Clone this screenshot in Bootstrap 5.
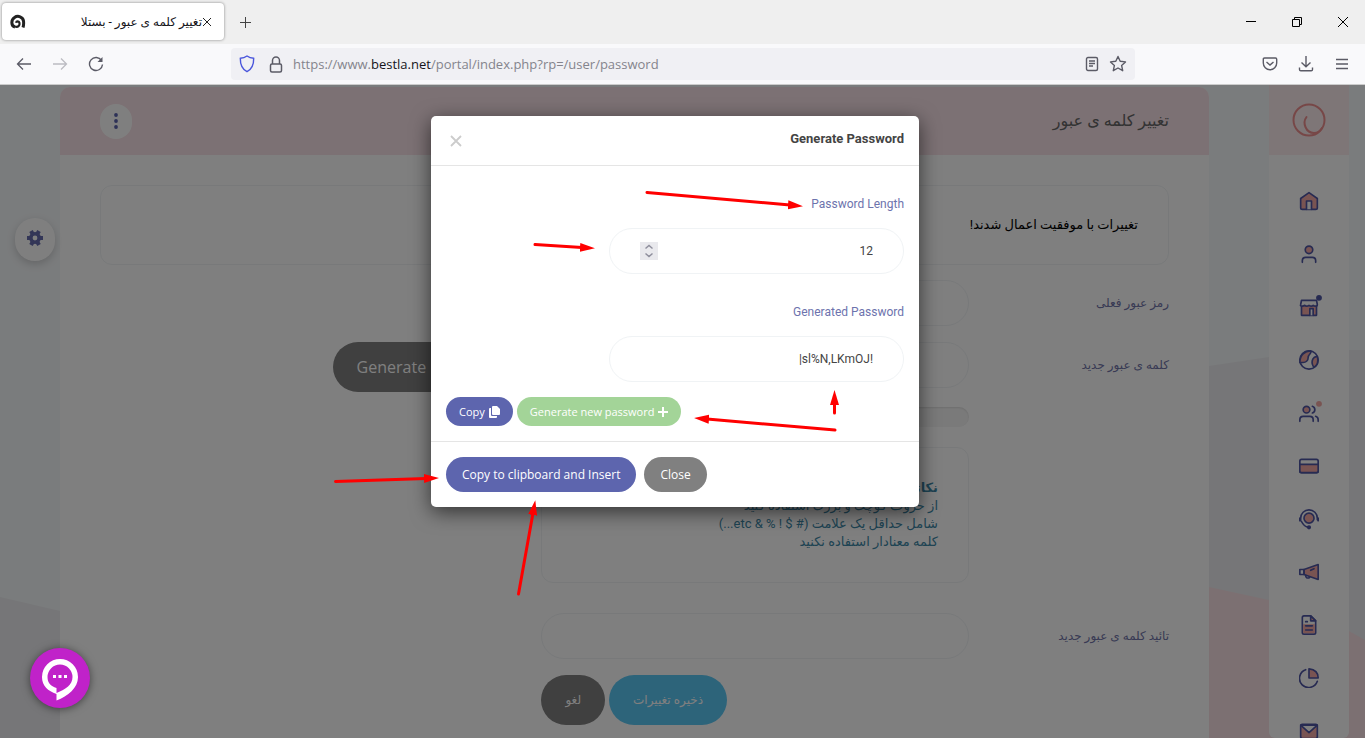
<!DOCTYPE html>
<html lang="fa">
<head>
<meta charset="utf-8">
<meta name="viewport" content="width=device-width, initial-scale=1">
<title>تغییر کلمه ی عبور - بستلا</title>
<link href="https://cdn.jsdelivr.net/npm/bootstrap@5.3.0/dist/css/bootstrap.min.css" rel="stylesheet">
<style>
:root{--ink:#5b63ae;--blush:#f9e3e8;--rule:#f0f3f5;--peach:#f3a9a5}
body{font-family:Roboto,"DejaVu Sans",sans-serif;font-size:12px;line-height:18px;height:100vh;overflow:hidden}
svg{display:block;flex:none}
.plain{background:none;border:0;padding:0;color:inherit}
/* browser window */
.tabstrip{height:44px;background:#efefef}
.tab-item{width:222px;height:37px;margin:3px 0 0 2px;padding:0 12px 0 8px;background:#fff;border-radius:4px;box-shadow:0 0 3px rgba(0,0,0,.45);color:#15141a}
.win-buttons{gap:36px;padding-right:17px}
.toolbar{height:41px;background:#f9f9fb;border-bottom:1px solid #ccc;color:#5b5b66}
.nav-buttons{gap:20px;width:231px;padding-left:16px}
.address{width:904px;height:32px;background:#f0f0f4;border-radius:4px;padding:0 8px;gap:10px}
.url{font-family:"Open Sans",sans-serif;font-size:13px;color:#84848c;text-decoration:none}
.url b{font-weight:400;color:#15141a}
.tool-icons{gap:20px;padding-right:15px}
/* portal */
.portal{background:#f5f8fa}
.layout{padding:0 16px 0 60px;gap:60px}
.panel{margin-top:2px;background:#fff;border-radius:10px 10px 0 0;overflow:hidden}
.panel-head{height:68px;padding:0 40px;background:var(--blush)}
.panel-head h1{font-size:16px;line-height:20px;color:#666}
.more-btn{width:32px;height:35px;border-radius:16px;background:#fff;color:var(--ink)}
.panel-main{padding:30px 40px 0}
.notice{height:80px;border:1px solid var(--rule);border-radius:12px;padding:0 30px;color:#000;font-size:13px;margin-bottom:15px}
.form-line{height:46px;gap:0 15px;margin-bottom:16px}
.form-line label{width:185px;color:#7074a8}
.pill{height:46px;border:1px solid var(--rule);border-radius:23px;background:#fff}
.field{width:40%}
.strength{height:20px;border-radius:10px;background:#f5f5f5;margin:19px 0 20px;box-shadow:inset 0 1px 2px rgba(0,0,0,.1)}
.tips{border:1px solid var(--rule);border-radius:12px;padding:31px 30px;color:#3d87a6;font-size:13px;margin-bottom:30px}
.big-btn{height:50px;border-radius:25px;border:0;background:#808080;color:#fff;padding:0 24px;font-family:"Open Sans","DejaVu Sans",sans-serif;font-size:12px;white-space:nowrap}
.big-btn.save{background:#5bc8f5}
.big-btn.latin{font-size:16px}
.offset-col{margin-right:200px}
.side{width:80px;background:#fff;border-radius:0 0 6px 6px}
.side-logo{height:70px;background:#fcedef}
.side ul{padding-top:19px}
.side li{height:53px}
.side svg{fill:none;stroke:#4f56a4;stroke-width:2;stroke-linecap:round;stroke-linejoin:round}
.side .side-logo svg{stroke:#ee8f8f}
.side .tint{fill:var(--peach)}
.gear-btn{left:15px;top:133px;width:40px;height:43px;border-radius:20px;background:#fff;box-shadow:0 3px 8px rgba(0,0,0,.18);color:#666cae}
.dim{background:rgba(0,0,0,.5)}
/* dialog */
.dialog-wrap{padding:31px 15px 0 0}
.dialog{width:488px;background:#fff;border-radius:5px;box-shadow:0 5px 20px rgba(0,0,0,.6)}
.dialog header{height:50px;padding:0 15px 3px;border-bottom:1px solid #e5e5e5}
.dialog h2{font-size:13px;color:#444;line-height:18px}
.dialog-main{padding:29px 15px 15px}
.dialog label{color:#6d73ad;margin-bottom:15px;line-height:18px;display:block}
.dialog .pill{width:295px;padding:0 30px}
.dialog .pill + label{margin-top:29px}
.dialog .pill input{border:0;outline:0;background:none;font-size:12px;color:#444;min-width:0;text-align:right;padding:0}
.pill input::-webkit-inner-spin-button{-webkit-appearance:none;margin:0}
.spin{width:18px;height:18px;background:#e9e9ed;color:#8f8f9d}
.quick{margin-top:15px}
.rbtn{border:0;border-radius:18px;color:#fff;font-family:"Open Sans",sans-serif;white-space:nowrap}
.rbtn.s{height:29px;font-size:11px;padding:0 13px}
.rbtn.m{height:35px;font-size:12px;padding:0 16px}
.violet{background:#5d65ae}.leaf{background:#a3d498}.ash{background:#808080}
.dialog footer{padding:15px;border-top:1px solid #e5e5e5;gap:8px}
.chat-btn{left:30px;bottom:30px;width:60px;height:60px;background:#c022c9;box-shadow:0 1px 8px rgba(0,0,0,.5)}
.arrows{left:0;top:0;pointer-events:none}
</style>
</head>
<body class="d-flex flex-column position-relative">
<div class="tabstrip d-flex align-items-start flex-shrink-0">
  <div class="tab-item d-flex align-items-center">
    <svg width="16" height="16" viewBox="0 0 16 16" fill="none" stroke="#222" stroke-width="3"><path d="M5 13C1 12 .8 6 4.500 3.500 8 1 13 3 13.500 7c.3 2.500 0 5-.5 6.500"/><path d="M5 12.500c3 1 5-1 4.500-3.500-.4-2-3-2-3.500-.3" stroke-width="2.200"/></svg>
    <span class="flex-fill" dir="rtl">تغییر کلمه ی عبور - بستلا</span>
    <button class="plain" aria-label="Close tab"><svg width="10" height="10" viewBox="0 0 10 10" stroke="#222"><path d="M1 1l8 8M9 1l-8 8"/></svg></button>
  </div>
  <button class="plain ms-3 align-self-center" aria-label="New tab"><svg width="11" height="11" viewBox="0 0 11 11" stroke="#444"><path d="M5.500 0v11M0 5.500h11"/></svg></button>
  <div class="win-buttons d-flex ms-auto align-self-center">
    <button class="plain" aria-label="Minimize"><svg width="10" height="10" viewBox="0 0 10 10" stroke="#000"><path d="M0 4.500h10"/></svg></button>
    <button class="plain" aria-label="Restore"><svg width="10" height="10" viewBox="0 0 10 10" fill="none" stroke="#000"><path d="M.5 2.500h7v7h-7zM2.500 2V.5h7v7H8"/></svg></button>
    <button class="plain" aria-label="Close"><svg width="10" height="10" viewBox="0 0 10 10" stroke="#000"><path d="M0 0l10 10M10 0L0 10"/></svg></button>
  </div>
</div>
<div class="toolbar d-flex align-items-center flex-shrink-0">
  <div class="nav-buttons d-flex">
    <button class="plain" aria-label="Back"><svg width="16" height="16" viewBox="0 0 16 16" fill="none" stroke="currentColor" stroke-width="1.300"><path d="M15 8H1.500M7 2.500L1.500 8 7 13.500"/></svg></button>
    <button class="plain" aria-label="Forward"><svg width="16" height="16" viewBox="0 0 16 16" fill="none" stroke="#bcbcc2" stroke-width="1.300"><path d="M1 8h13.500M9 2.500L14.500 8 9 13.500"/></svg></button>
    <button class="plain" aria-label="Reload"><svg width="16" height="16" viewBox="0 0 16 16" fill="none" stroke="currentColor" stroke-width="1.400"><path d="M13.500 4.500A6.500 6.500 0 1 0 14.500 8.500"/><path d="M14.500 1v5h-5z" fill="currentColor" stroke="none"/></svg></button>
  </div>
  <div class="address d-flex align-items-center">
    <svg width="16" height="18" viewBox="0 0 16 18" fill="none" stroke="#4a56dc" stroke-width="1.400"><path d="M8 1C6 2.500 3.500 3.200 1.300 3.300 1.200 10 3.500 14.500 8 16.700c4.500-2.200 6.800-6.700 6.700-13.400C12.500 3.200 10 2.500 8 1z"/></svg>
    <svg class="ms-1" width="14" height="17" viewBox="0 0 14 17" fill="none" stroke="currentColor" stroke-width="1.500"><rect x="1.500" y="8" width="11" height="8" rx="1.500"/><path d="M3.500 8V4.500a3.500 3.500 0 0 1 7 0V8"/></svg>
    <a class="url flex-fill" href="#">https://www.<b>bestla.net</b>/portal/index.php?rp=/user/password</a>
    <svg width="14" height="16" viewBox="0 0 14 16" fill="none" stroke="currentColor" stroke-width="1.400"><rect x="1.500" y="1.500" width="11" height="13" rx="1.500"/><path d="M4 5h6M4 7.500h6M4 10h4"/></svg>
    <svg width="18" height="18" viewBox="0 0 18 18" fill="none" stroke="currentColor" stroke-width="1.400" stroke-linejoin="round"><path d="M9 1.500l2.200 4.800 5.300.6-3.900 3.500 1.100 5.300L9 13l-4.700 2.700 1.100-5.300L1.500 6.900l5.300-.6z"/></svg>
  </div>
  <div class="tool-icons d-flex ms-auto">
    <button class="plain" aria-label="Pocket"><svg width="16" height="16" viewBox="0 0 16 16" fill="none" stroke="currentColor" stroke-width="1.400"><path d="M2.500 2h11q1.200 0 1.200 1.200V7a6.700 6.700 0 0 1-13.400 0V3.200Q1.300 2 2.500 2zM4.500 6L8 9l3.500-3"/></svg></button>
    <button class="plain" aria-label="Downloads"><svg width="16" height="16" viewBox="0 0 16 16" fill="none" stroke="currentColor" stroke-width="1.400"><path d="M8 0v10.500M3.500 6.500L8 10.700l4.500-4.200M1.500 11.500v2q0 1.300 1.300 1.300h10.400q1.300 0 1.300-1.300v-2"/></svg></button>
    <button class="plain" aria-label="Menu"><svg width="16" height="16" viewBox="0 0 16 16" stroke="currentColor" stroke-width="1.300"><path d="M2 3.500h12M2 8h12M2 12.500h12"/></svg></button>
  </div>
</div>

<div class="portal flex-fill position-relative overflow-hidden">
  <svg class="position-absolute w-100 h-100" viewBox="0 0 1365 653" preserveAspectRatio="none" aria-hidden="true"><path fill="#ecedf0" d="M0 512L60 526 1209 281 1269 272 1349 265h16v388H0z"/><path fill="#f8e1e5" d="M1150 490l59 12 60 13 80 31 16 9v98h-215z"/></svg>
  <div class="layout d-flex h-100 position-relative">
    <main class="panel flex-fill" dir="rtl">
      <div class="panel-head d-flex align-items-center justify-content-between">
        <h1 class="m-0 fw-normal">تغییر کلمه ی عبور</h1>
        <button class="more-btn border-0 p-0 d-flex align-items-center justify-content-center" aria-label="بیشتر"><svg width="4" height="16" viewBox="0 0 4 16" fill="currentColor"><circle cx="2" cy="2" r="1.900"/><circle cx="2" cy="8" r="1.900"/><circle cx="2" cy="14" r="1.900"/></svg></button>
      </div>
      <div class="panel-main">
        <div class="notice d-flex align-items-center">تغییرات با موفقیت اعمال شدند!</div>
        <div class="form-line d-flex align-items-center"><label for="cur">رمز عبور فعلی</label><input class="pill field" id="cur" type="password"></div>
        <div class="form-line d-flex align-items-center"><label for="new">کلمه ی عبور جدید</label><input class="pill field" id="new" type="password"><button class="big-btn latin align-self-start" dir="ltr">Generate Password</button></div>
        <div class="offset-col field">
          <div class="strength"></div>
          <div class="tips"><b>نکاتی برای یک رمز عبور خوب</b><br>از حروف کوچک و بزرگ استفاده کنید<br>شامل حداقل یک علامت (# $ ! % &amp; etc...)<br>کلمه معنادار استفاده نکنید</div>
        </div>
        <div class="form-line d-flex align-items-center"><label for="rep">تائید کلمه ی عبور جدید</label><input class="pill field" id="rep" type="password"></div>
        <div class="offset-col field d-flex justify-content-end gap-1"><button class="big-btn save">ذخیره تغییرات</button><button class="big-btn">لغو</button></div>
      </div>
    </main>
    <nav class="side flex-shrink-0 overflow-hidden" aria-label="Portal">
      <a href="#" class="side-logo d-flex align-items-center justify-content-center" aria-label="Bestla"><svg width="34" height="34" viewBox="0 0 34 34"><circle cx="17" cy="17" r="15.500"/><path d="M14.500 14C10 20 14 30 22 30q5 0 8-5"/></svg></a>
      <ul class="list-unstyled m-0 d-flex flex-column align-items-center">
        <li class="d-flex align-items-center"><a href="#" aria-label="Home"><svg width="20" height="20" viewBox="0 0 24 24"><path class="tint" d="M2 9l10-7 10 7v11q0 2-2 2H4q-2 0-2-2z"/><path d="M9 22V12h6v10" fill="#fff"/></svg></a></li>
        <li class="d-flex align-items-center"><a href="#" aria-label="Account"><svg width="20" height="20" viewBox="0 0 24 24"><circle class="tint" cx="12" cy="7" r="4.500"/><path d="M4 22v-2q0-4 4-4h8q4 0 4 4v2"/></svg></a></li>
        <li class="d-flex align-items-center"><a href="#" aria-label="Store"><svg width="20" height="20" viewBox="0 0 24 24" overflow="visible"><path class="tint" d="M3 10v12h18V10z"/><path d="M3 4h18l1 5q0 2-2 2t-3-1q-2 2-5 0-3 2-5 0-2 1-3 1-3 0-2-2z" fill="#fff"/><path d="M13 22v-8h4v8" fill="#fff"/><circle cx="24" cy="1" r="2.500" fill="#4b52a0"/></svg></a></li>
        <li class="d-flex align-items-center"><a href="#" aria-label="Domains"><svg width="20" height="20" viewBox="0 0 24 24"><circle cx="12" cy="12" r="11"/><path class="tint" d="M1 15C1 6 7 1 14 1c2 3-3 4-3 8s-3 6-6 6zM22 8c-5-1-7 5-6 9s3 4 5 1 2-6 1-10z"/></svg></a></li>
        <li class="d-flex align-items-center"><a href="#" aria-label="Users"><svg width="20" height="20" viewBox="0 0 24 24" overflow="visible"><circle class="tint" cx="9" cy="8" r="4"/><path d="M1 22v-2q0-4 4-4h8q4 0 4 4v2M16 4q3 1 3 4t-3 4M20 16q3 1 3 4v2"/><circle cx="24" cy="1" r="3.500" stroke="none" fill="#f3a9a5" stroke-width="0" style="stroke:none"/></svg></a></li>
        <li class="d-flex align-items-center"><a href="#" aria-label="Billing"><svg width="20" height="20" viewBox="0 0 24 24"><rect x="1" y="4" width="22" height="16" rx="2"/><path class="tint" d="M1 10h22v8q0 2-2 2H3q-2 0-2-2z"/></svg></a></li>
        <li class="d-flex align-items-center"><a href="#" aria-label="Support"><svg width="20" height="20" viewBox="0 0 24 24" overflow="visible"><circle class="tint" cx="12" cy="11" r="6"/><path d="M1 11v3M23 11v3M2 14V11a10 10 0 0 1 20 0v2M3 15q3 6 8 7"/><circle cx="12" cy="22" r="1.500" fill="#4b52a0"/></svg></a></li>
        <li class="d-flex align-items-center"><a href="#" aria-label="Announcements"><svg width="20" height="20" viewBox="0 0 24 24"><path class="tint" d="M6 9l17-6v18L6 15z"/><path d="M1 9h5v6H1zM8 16q0 4 4 3l1-1M14 10l4-2"/></svg></a></li>
        <li class="d-flex align-items-center"><a href="#" aria-label="Documents"><svg width="20" height="20" viewBox="0 0 24 24"><path d="M14 1H6Q4 1 4 3v18q0 2 2 2h12q2 0 2-2V7z"/><path fill="#f3a9a5" stroke="none" style="stroke:none" d="M5 11h14v11H5z"/><path class="tint" d="M14 1v6h6z"/><path d="M8 8h2M8 13h8M8 18h8"/></svg></a></li>
        <li class="d-flex align-items-center"><a href="#" aria-label="Reports"><svg width="20" height="20" viewBox="0 0 24 24"><path class="tint" d="M12 1q11 1 11 11H12z"/><path d="M8 2a11 11 0 1 0 14 14"/></svg></a></li>
        <li class="d-flex align-items-center"><a href="#" aria-label="Messages"><svg width="20" height="20" viewBox="0 0 24 24"><rect class="tint" x="2" y="4" width="20" height="17" rx="2"/><path fill="#fff" d="M2 5h20l-10 9z"/></svg></a></li>
      </ul>
    </nav>
  </div>
  <button class="gear-btn position-absolute border-0 p-0 pb-1 d-flex align-items-center justify-content-center" aria-label="Settings"><svg width="16" height="16" viewBox="0 0 16 16" fill="none" stroke="currentColor"><path stroke-width="4" d="M4 1.100l2 3.400M12 1.100l-2 3.400M4 14.900l2-3.400M12 14.900l-2-3.400M0 8h3M13 8h3"/><circle cx="8" cy="8" r="4.200" stroke-width="3.600"/></svg></button>
  <div class="dim position-absolute top-0 start-0 w-100 h-100"></div>
  <div class="dialog-wrap position-absolute top-0 start-0 w-100 d-flex justify-content-center">
    <section class="dialog" role="dialog" aria-labelledby="dlg">
      <header class="d-flex align-items-center justify-content-between">
        <button class="plain px-1" aria-label="Close"><svg class="mt-1" width="12" height="12" viewBox="0 0 12 12" stroke="#ccc" stroke-width="1.800"><path d="M1 1l10 10M11 1L1 11"/></svg></button>
        <h2 class="m-0 fw-bold" id="dlg">Generate Password</h2>
      </header>
      <div class="dialog-main text-end">
        <label for="len">Password Length</label>
        <div class="pill d-flex align-items-center ms-auto">
          <button class="plain spin d-flex align-items-center justify-content-center flex-shrink-0" aria-label="Change length"><svg width="10" height="14" viewBox="0 0 10 14" fill="none" stroke="currentColor" stroke-width="1.500"><path d="M1.500 4.500L5 1.500l3.500 3M1.500 9.500l3.500 3 3.500-3"/></svg></button>
          <input class="flex-fill" id="len" type="number" value="12">
        </div>
        <label for="gen">Generated Password</label>
        <div class="pill d-flex align-items-center ms-auto"><input class="flex-fill" id="gen" type="text" value="|sl%N,LKmOJ!"></div>
        <div class="quick d-flex gap-1">
          <button class="rbtn s violet d-flex align-items-center gap-1">Copy <svg width="11" height="12" viewBox="0 0 11 12" fill="#fff"><path d="M4 0h4l3 3v5q0 1-1 1H4Q3 9 3 8V1q0-1 1-1z"/><path d="M0 3q0-1 1-1h1v7q0 1 1 1h5v1q0 1-1 1H1q-1 0-1-1z"/></svg></button>
          <button class="rbtn s leaf d-flex align-items-center gap-1">Generate new password <svg width="10" height="10" viewBox="0 0 10 10" stroke="#fff" stroke-width="2"><path d="M5 0v10M0 5h10"/></svg></button>
        </div>
      </div>
      <footer class="d-flex">
        <button class="rbtn m violet">Copy to clipboard and Insert</button>
        <button class="rbtn m ash">Close</button>
      </footer>
    </section>
  </div>
</div>
<button class="chat-btn position-absolute rounded-circle border-0 p-0" aria-label="Chat"><svg width="60" height="60" viewBox="0 0 60 60"><path fill="#fff" fill-rule="evenodd" d="M30 11a18 18 0 0 1 18 18c0 11-10 19-21.500 23.500V46C18 43 12 38 12 29a18 18 0 0 1 18-18zm0 5.500A12.500 12.500 0 0 0 17.500 29c0 6 3 9 9 11v5C36 41 42.500 37 42.500 29A12.500 12.500 0 0 0 30 16.500z"/><path fill="#fff" d="M23 27h3v3h-3zM28.500 27h3v3h-3zM34 27h3v3h-3z"/></svg></button>
<svg class="arrows position-absolute" width="1365" height="738" viewBox="0 0 1365 738" aria-hidden="true">
  <defs><marker id="tip" markerUnits="userSpaceOnUse" markerWidth="16" markerHeight="10" refX="2" refY="5" orient="auto"><path d="M0 .5L15 5 0 9.500z" fill="#f00"/></marker></defs>
  <g stroke="#f00" stroke-width="3" stroke-linecap="round">
    <path d="M647 192.500L790 205" marker-end="url(#tip)"/><path d="M535 244.500L582 247.500" marker-end="url(#tip)"/><path d="M834.500 413V403" marker-end="url(#tip)"/><path d="M835 430L707 419" marker-end="url(#tip)"/><path d="M335.500 481.500L426 478.500" marker-end="url(#tip)"/><path d="M518.500 594L533 513" marker-end="url(#tip)"/>
  </g>
</svg>
<script src="https://cdn.jsdelivr.net/npm/bootstrap@5.3.0/dist/js/bootstrap.bundle.min.js"></script>
</body>
</html>
